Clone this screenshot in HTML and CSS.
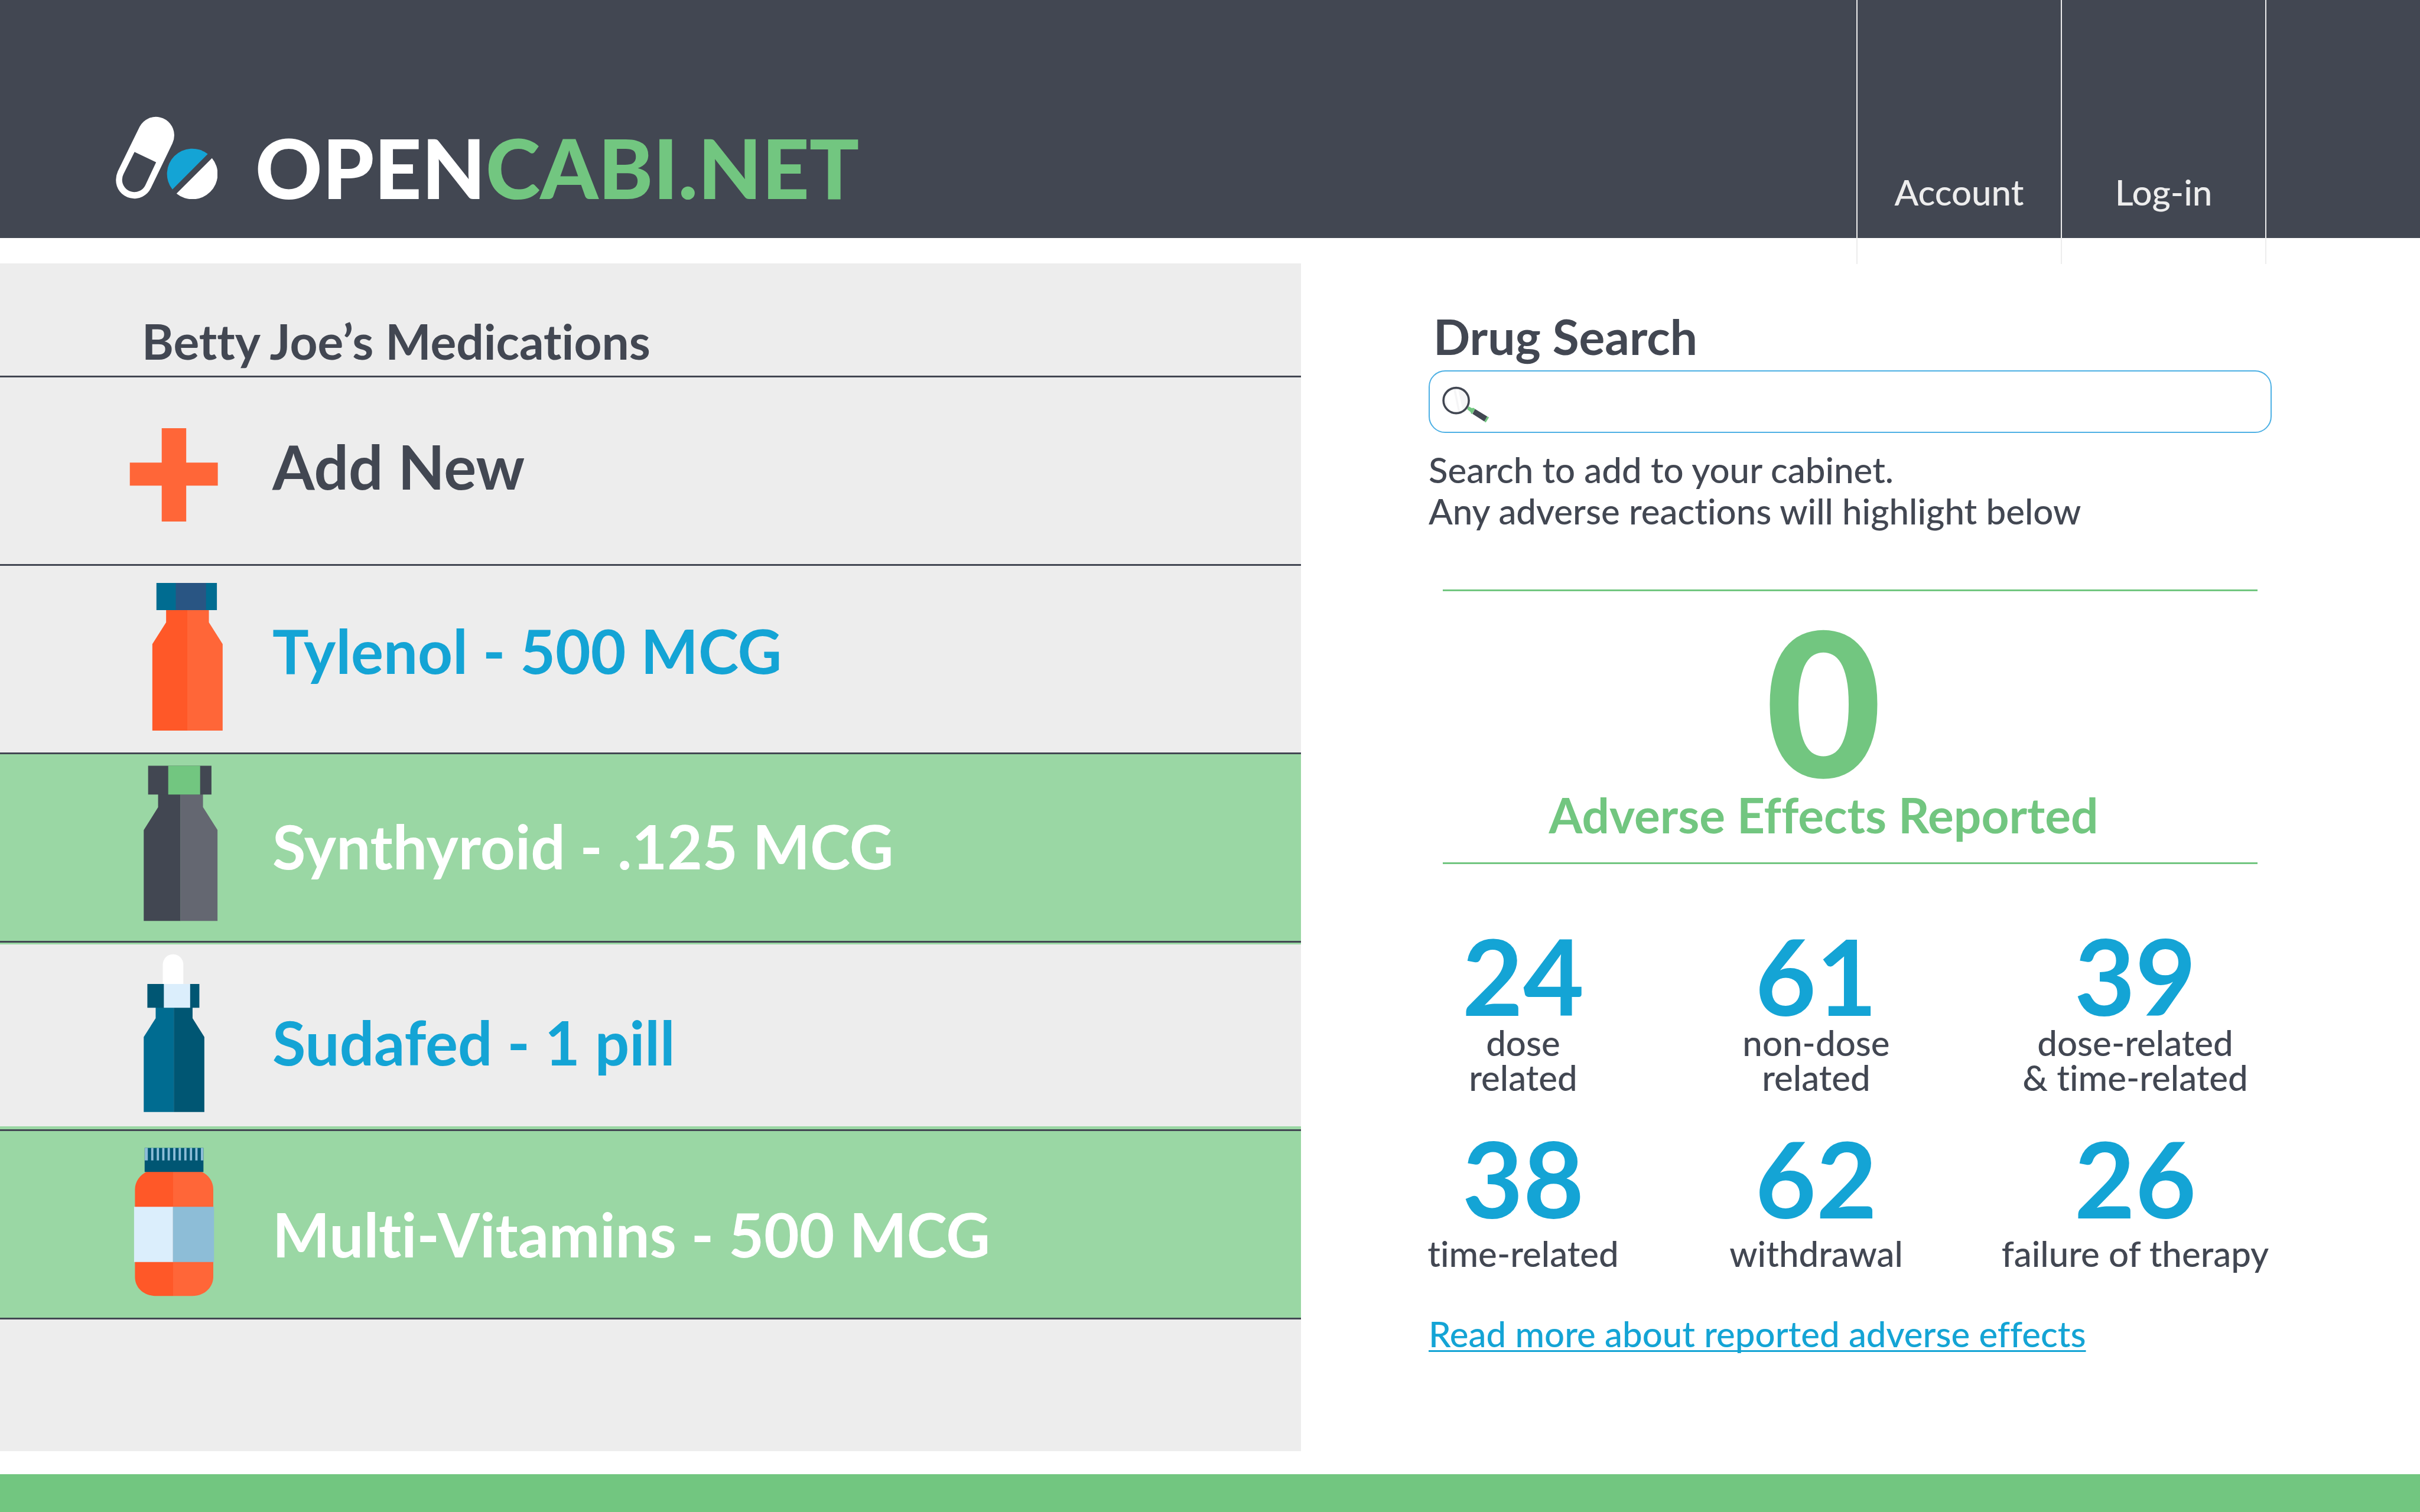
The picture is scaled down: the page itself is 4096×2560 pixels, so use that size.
FILE: index.html
```html
<!DOCTYPE html>
<html lang="en">
<head>
<meta charset="utf-8">
<meta name="viewport" content="width=device-width, initial-scale=1">
<title>OpenCabi.net</title>
<link rel="stylesheet" href="styles.css">
</head>
<body>
<header class="header">
  <a class="logo" href="#">
    <svg class="logo-icon" viewBox="165 110 673 547" aria-hidden="true">
      <path fill="#fff" fill-rule="evenodd" d="M323 178A121.500 121.500 0 0 1 552 232Q553 262 540 289L398 583A121.500 121.500 0 0 1 166 530Q166 502 178 474ZM289 345L216 492A81 81 0 0 0 207 530A81 81 0 0 0 360 567L432 414Z"/>
      <path fill="#14a4d5" d="M774 359A167 167 0 0 0 540 594Z"/>
      <path fill="#fff" d="M802 386A167 167 0 0 1 567 621Z"/>
    </svg>
    <span class="logo-text">OPEN<span class="logo-accent">CABI.NET</span></span>
  </a>
  <nav class="nav">
    <a class="nav-link" href="#">Account</a>
    <a class="nav-link" href="#">Log-in</a>
  </nav>
</header>

<main class="main">
  <section class="cabinet">
    <h1 class="cabinet-title">Betty Joe’s Medications</h1>
    <ul class="meds">
      <li class="med med-add">
        <button class="med-button" type="button">
          <svg class="med-icon" viewBox="0 0 840 1235" aria-hidden="true">
            <path fill="#ff6638" d="M288 336H450V564H659V716H450V954H288V716H77V564H288Z"/>
          </svg>
          <span class="med-name">Add New</span>
        </button>
      </li>
      <li class="med med-tablet">
        <svg class="med-icon" viewBox="0 22 840 1235" aria-hidden="true">
          <path fill="#ff5828" d="M317 310H458V1112H226V540L317 396Z"/>
          <path fill="#ff6638" d="M457 310H600V396L691 540V1112H457Z"/>
          <path fill="#006c91" d="M253 135H653V315H253Z"/>
          <path fill="#295583" d="M381 135H581V315H381Z"/>
        </svg>
        <a class="med-name" href="#">Tylenol - 500 MCG</a>
      </li>
      <li class="med med-capsule med-active">
        <svg class="med-icon" viewBox="0 68 840 1235" aria-hidden="true">
          <path fill="#424752" d="M264 330H412V1171H169V570L264 419Z"/>
          <path fill="#646771" d="M411 330H561V418L657 569V1171H411Z"/>
          <path fill="#424752" d="M198 144H617V335H198Z"/>
          <path fill="#72c680" d="M331 144H542V335H331Z"/>
        </svg>
        <a class="med-name" href="#">Synthyroid - .125 MCG</a>
      </li>
      <li class="med med-drops">
        <svg class="med-icon" viewBox="0 -6 840 1235" aria-hidden="true">
          <path fill="#fff" d="M295 270V139A68 68 0 0 1 431 139V270Z"/>
          <path fill="#006c91" d="M248 420H369V1115H169V618L248 494Z"/>
          <path fill="#005673" d="M368 420H492V494L570 618V1115H368Z"/>
          <path fill="#005673" d="M193 268H537V425H193Z"/>
          <path fill="#dbeefc" d="M302 268H476V425H302Z"/>
        </svg>
        <a class="med-name" href="#">Sudafed - 1 pill</a>
      </li>
      <li class="med med-vitamin med-active">
        <svg class="med-icon" viewBox="0 40 840 1235" aria-hidden="true">
          <path fill="#ff5828" d="M190 308H364V1131H255C160 1131 111 1070 111 1005V425C111 375 145 330 190 308Z"/>
          <path fill="#ff6638" d="M363 308H550C598 330 629 375 629 425V1005C629 1070 575 1131 490 1131H363Z"/>
          <path fill="#005673" d="M175 151H564V311H175Z"/>
          <path fill="#8dbdd7" d="M176 151h20v83h-20zM218 151h15v83h-15zM255 151h15v83h-15zM291 151h15v83h-15zM327 151h15v83h-15zM364 151h15v83h-15zM400 151h15v83h-15zM437 151h15v83h-15zM474 151h15v83h-15zM510 151h15v83h-15zM547 151h16v83h-16z"/>
          <path fill="#dbeefc" d="M105 541H363V907H105Z"/>
          <path fill="#8dbdd7" d="M362 541H634V907H362Z"/>
        </svg>
        <a class="med-name" href="#">Multi-Vitamins - 500 MCG</a>
      </li>
    </ul>
  </section>

  <section class="effects">
    <label class="search-label" for="drug-search">Drug Search</label>
    <div class="search-box">
      <svg class="search-icon" viewBox="110 120 320 250" aria-hidden="true">
        <circle cx="206" cy="218" r="80" fill="#fff"/>
        <path fill="#f5f5f6" d="M134 190L156 282Q134 262 130 222ZM188 143H203L232 292L220 296ZM219 143Q262 152 281 205Q283 240 263 268L249 279Z"/>
        <circle cx="206" cy="218" r="84" fill="none" stroke="#424752" stroke-width="14"/>
        <path fill="#72c680" d="M289 257L311 269Q320 263 331 274L312 307Q302 307 302 295L278 275ZM408 323Q418 323 423 330L402 363Q394 361 392 353Z"/>
        <path fill="#424752" d="M331 274L411 323L392 356L314 307Z"/>
      </svg>
      <input class="search-input" id="drug-search" type="search">
    </div>
    <p class="search-help">Search to add to your cabinet.<br>Any adverse reactions will highlight below</p>

    <div class="total">
      <strong class="total-value">0</strong>
      <span class="total-label">Adverse Effects Reported</span>
    </div>

    <ul class="stats">
      <li class="stat"><strong class="stat-value">24</strong><span class="stat-label">dose<br>related</span></li>
      <li class="stat"><strong class="stat-value">61</strong><span class="stat-label">non-dose<br>related</span></li>
      <li class="stat"><strong class="stat-value">39</strong><span class="stat-label">dose-related<br>&amp; time-related</span></li>
      <li class="stat stat-single"><strong class="stat-value">38</strong><span class="stat-label">time-related</span></li>
      <li class="stat stat-single"><strong class="stat-value">62</strong><span class="stat-label">withdrawal</span></li>
      <li class="stat stat-single"><strong class="stat-value">26</strong><span class="stat-label">failure of therapy</span></li>
    </ul>

    <a class="more" href="#">Read more about reported adverse effects</a>
  </section>
</main>

<footer class="footer"></footer>
</body>
</html>
```
FILE: styles.css
```css
:root {
  --ink: #424752;
  --green: #72c680;
  --green-light: #9ad7a4;
  --blue: #14a4d5;
  --grey: #ededed;
}

* { box-sizing: border-box; }

body {
  display: flex;
  flex-direction: column;
  min-height: 100vh;
  margin: 0;
  background: #fff;
  color: var(--ink);
  font: 500 60px/70px Lato, "Open Sans", sans-serif;
  font-variant-ligatures: none;
}

a { color: inherit; text-decoration: none; }
ul { margin: 0; padding: 0; list-style: none; }

/* Header */
.header {
  display: flex;
  align-items: flex-end;
  justify-content: space-between;
  padding: 0 260px 0 196px;
  background: var(--ink);
}

.logo {
  display: flex;
  align-items: baseline;
  gap: 64px;
  padding: 197px 0 40px;
}

.logo-icon { width: 172px; height: 140px; }

.logo-text {
  color: #fff;
  font-size: 140px;
  font-weight: 900;
  line-height: 160px;
}

.logo-accent { color: var(--green); }

.nav {
  display: flex;
  align-self: stretch;
  margin-bottom: -44px;
  border-right: 2px solid var(--grey);
}

.nav-link {
  display: flex;
  align-items: flex-end;
  justify-content: center;
  width: 346px;
  padding-bottom: 87px;
  border-left: 2px solid var(--grey);
  color: var(--grey);
}

/* Page columns */
.main {
  display: grid;
  flex: 1;
  grid-template-columns: 2202fr 1894fr;
  margin: 43px 0 39px;
}

.footer { height: 64px; background: var(--green); }

/* Cabinet */
.cabinet { background: var(--grey); }

.cabinet-title {
  margin: 0;
  padding: 86px 240px 14px;
  border-bottom: 3px solid var(--ink);
  font-size: 82px;
  font-weight: 700;
  line-height: 90px;
}

.med,
.med-button { display: flex; gap: 46px; }

.med {
  padding-left: 200px;
  border-bottom: 3px solid var(--ink);
  color: var(--blue);
  font-size: 103px;
  font-weight: 700;
  line-height: 120px;
}

.med-button {
  flex: 1;
  padding: 0;
  border: 0;
  background: none;
  color: var(--ink);
  font: inherit;
  text-align: left;
}

.med-icon { flex: none; width: 215px; height: 316px; }

.med-active { background: var(--green-light); color: #fff; }
.med-drops { box-shadow: inset 0 3px var(--green-light), inset 0 -5px var(--green-light); }

.med-add .med-name { padding-top: 90px; }
.med-tablet .med-name { padding-top: 83px; }
.med-capsule .med-name { padding-top: 95px; }
.med-drops .med-name { padding-top: 108px; }
.med-vitamin .med-name { padding-top: 114px; }

/* Search */
.effects { padding: 78px 251px 0 216px; }

.search-label {
  display: block;
  padding: 0 8px 13px;
  font-size: 82px;
  font-weight: 700;
  line-height: 90px;
}

.search-box {
  display: flex;
  gap: 20px;
  padding: 24px 20px 14px;
  border: 2px solid #4db0e4;
  border-radius: 28px;
}

.search-icon { flex: none; width: 82px; height: 64px; }

.search-input {
  flex: 1;
  min-width: 0;
  height: 64px;
  padding: 0;
  border: 0;
  outline: 0;
  background: none;
  color: inherit;
  font: inherit;
  line-height: 64px;
}

.search-help { margin: 27px 0 98px; }

/* Totals */
.total {
  display: flex;
  flex-direction: column;
  align-items: center;
  margin: 0 24px;
  padding: 33px 90px 36px 0;
  border: solid var(--green);
  border-width: 3px 0;
  color: var(--green);
  font-weight: 700;
}

.total-value { font-size: 340px; line-height: 300px; }
.total-label { font-size: 82px; line-height: 90px; }

.stats {
  display: grid;
  grid-template-columns: 320fr 672fr 408fr;
  row-gap: 55px;
  margin: 103px 27px 71px 0;
}

.stat {
  display: flex;
  flex-direction: column;
  align-items: center;
  min-width: 0;
  text-align: center;
  white-space: nowrap;
}

.stat-value {
  color: var(--blue);
  font-size: 178px;
  font-weight: 700;
  line-height: 170px;
}

.stat-label { line-height: 59px; }
.stat-single { gap: 14px; }

.more {
  color: var(--blue);
  text-decoration: underline 3px;
  text-decoration-skip-ink: none;
  text-underline-offset: 5px;
}
```
